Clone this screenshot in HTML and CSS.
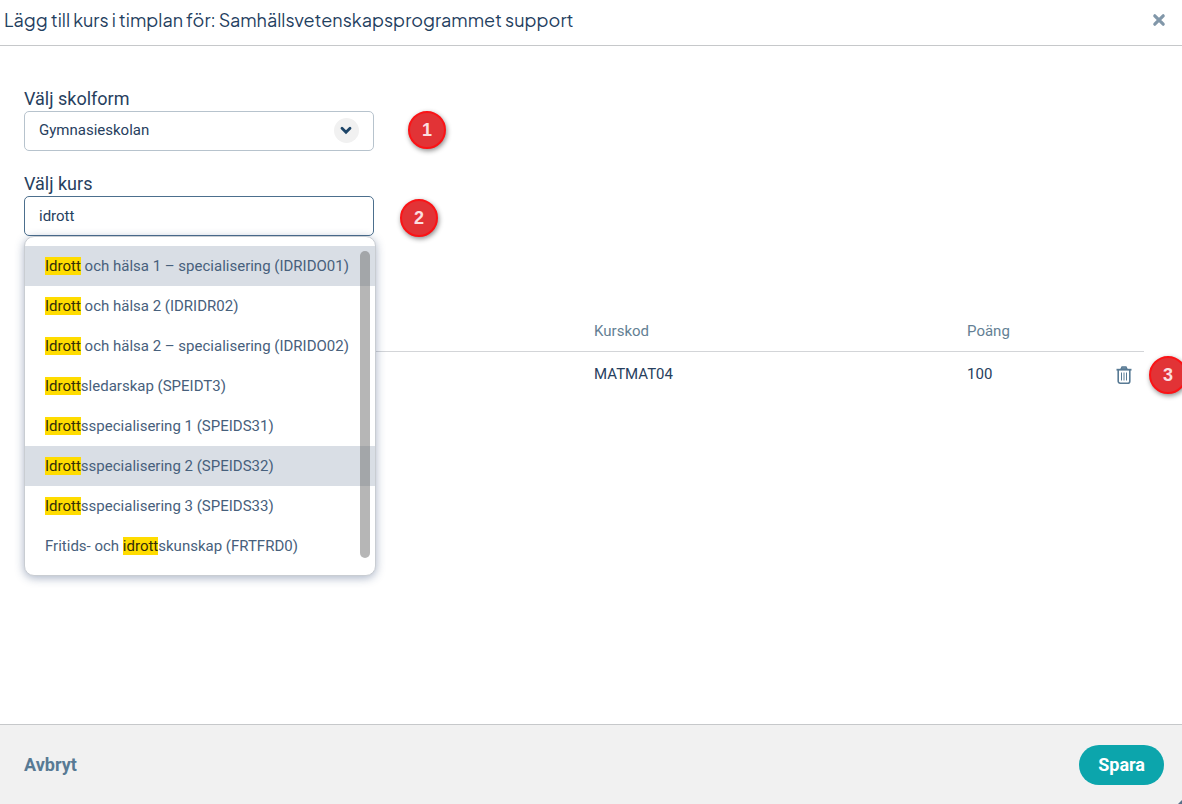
FILE: index.html
```html
<!DOCTYPE html>
<html lang="sv">
<head>
<meta charset="utf-8">
<meta name="viewport" content="width=device-width, initial-scale=1">
<title>Lägg till kurs i timplan</title>
<link rel="stylesheet" href="styles.css">
</head>
<body>
<main class="dialog">
  <header class="dialog-header">
    <h1 class="dialog-title">Lägg till kurs i timplan för: Samhällsvetenskapsprogrammet support</h1>
    <button class="close-button" type="button" aria-label="Stäng">
      <svg width="14" height="14" viewBox="0 0 14 14"><path d="M2.8 2.8 11.2 11.2M11.2 2.8 2.8 11.2" fill="none" stroke="#8197a9" stroke-width="3.2" stroke-linecap="round"/></svg>
    </button>
  </header>

  <section class="dialog-body">
    <div class="field">
      <label class="field-label" for="school-form">Välj skolform</label>
      <div class="control">
        <select class="input select" id="school-form">
          <option>Gymnasieskolan</option>
        </select>
        <span class="chevron">
          <svg width="15" height="11" viewBox="0 0 15 11"><path d="M3 3.2 7 7.2 11 3.2" fill="none" stroke="#1d4568" stroke-width="2.8" stroke-linecap="round"/></svg>
        </span>
        <span class="callout callout-first">1</span>
      </div>
    </div>

    <div class="field">
      <label class="field-label" for="course">Välj kurs</label>
      <div class="control">
        <input class="input input-active" id="course" type="text" value="idrott" autocomplete="off">
        <span class="callout callout-second">2</span>
        <div class="menu">
          <ul class="menu-list">
            <li class="menu-item selected"><mark>Idrott</mark> och hälsa 1 – specialisering (IDRIDO01)</li>
            <li class="menu-item"><mark>Idrott</mark> och hälsa 2 (IDRIDR02)</li>
            <li class="menu-item"><mark>Idrott</mark> och hälsa 2 – specialisering (IDRIDO02)</li>
            <li class="menu-item"><mark>Idrott</mark>sledarskap (SPEIDT3)</li>
            <li class="menu-item"><mark>Idrott</mark>sspecialisering 1 (SPEIDS31)</li>
            <li class="menu-item selected"><mark>Idrott</mark>sspecialisering 2 (SPEIDS32)</li>
            <li class="menu-item"><mark>Idrott</mark>sspecialisering 3 (SPEIDS33)</li>
            <li class="menu-item">Fritids- och <mark>idrott</mark>skunskap (FRTFRD0)</li>
          </ul>
          <span class="scroll-thumb"></span>
        </div>
      </div>
    </div>

    <table class="courses">
      <colgroup><col class="col-name"><col class="col-code"><col><col class="col-action"></colgroup>
      <thead>
        <tr><th></th><th scope="col">Kurskod</th><th scope="col">Poäng</th><th></th></tr>
      </thead>
      <tbody>
        <tr>
          <td></td>
          <td>MATMAT04</td>
          <td>100</td>
          <td class="action-cell">
            <button class="delete-button" type="button" aria-label="Ta bort">
              <svg width="16" height="18" viewBox="0 0 16 18" fill="none" stroke="#587a94"><path d="M5 3 6 1h4l1 2z" fill="#a9bac8" stroke-width="1.3"/><path d="M.5 3.7h15" stroke-width="1.8"/><path d="M2.2 4v11.2a2 2 0 0 0 2 2h7.6a2 2 0 0 0 2-2V4" stroke-width="1.6"/><path d="M5.5 6.5v8M8 6.5v8M10.5 6.5v8" stroke-width="1"/></svg>
            </button>
            <span class="callout callout-third">3</span>
          </td>
        </tr>
      </tbody>
    </table>
  </section>

  <footer class="dialog-footer">
    <button class="cancel-button" type="button">Avbryt</button>
    <button class="save-button" type="button">Spara</button>
    <svg class="resize-corner" width="4" height="4" viewBox="0 0 4 4"><path d="M4 0v4H0z" fill="#587089"/></svg>
  </footer>
</main>
</body>
</html>
```
FILE: styles.css
```css
* {
  box-sizing: border-box;
}

body {
  margin: 0;
  background: #fff;
  color: #27405e;
  font-family: Roboto, "Liberation Sans", sans-serif;
  font-size: 15px;
  line-height: 20px;
}

button {
  padding: 0;
  border: 0;
  background: none;
  font: inherit;
  cursor: pointer;
}

svg {
  display: block;
}

.dialog {
  display: flex;
  flex-direction: column;
  min-height: 100vh;
  overflow: hidden;
}

.dialog-header {
  display: flex;
  align-items: center;
  justify-content: space-between;
  padding: 8px 16px 13px 4px;
  border-bottom: 1px solid #c6c8ca;
}

.dialog-title {
  margin: 0;
  color: #1f4060;
  font-family: "Plus Jakarta Sans", Inter, sans-serif;
  font-size: 18px;
  font-weight: 400;
  line-height: 24px;
}

.dialog-body {
  flex: 1;
  padding: 41px 38px 24px 24px;
}

.field {
  max-width: 350px;
  margin-bottom: 21px;
}

.field-label {
  display: block;
  font-size: 18px;
  line-height: 24px;
}

.control {
  position: relative;
}

.input {
  display: block;
  width: 100%;
  height: 40px;
  padding: 0 14px;
  border: 1px solid #b7c3cd;
  border-radius: 5px;
  outline: 0;
  background: #fff;
  color: #27405e;
  font: inherit;
}

.select {
  padding-bottom: 2px;
  appearance: none;
}

.input-active {
  border-color: #4c6f8d;
}

.chevron {
  position: absolute;
  top: 7px;
  right: 15px;
  display: grid;
  place-items: center;
  width: 25px;
  height: 25px;
  border-radius: 50%;
  background: #f1f1f1;
  pointer-events: none;
}

.callout {
  position: absolute;
  display: grid;
  place-items: center;
  width: 38px;
  height: 38px;
  border: 2px solid #fb1316;
  border-radius: 50%;
  background: #e23336;
  box-shadow: 1px 2px 5px rgba(0, 0, 0, 0.45);
  color: #fbdfe0;
  font-family: "Liberation Sans", Arial, sans-serif;
  font-size: 18px;
  font-weight: 700;
}

.callout-first {
  top: 0;
  left: 384px;
}

.callout-second {
  top: 3px;
  left: 376px;
}

.callout-third {
  top: 4px;
  right: -43px;
}

.menu {
  position: absolute;
  top: 40px;
  left: 0;
  right: -2px;
  padding: 9px 0;
  border: 1px solid #c9cdd2;
  border-radius: 10px;
  background: #fff;
  box-shadow: 0 2px 10px rgba(39, 64, 110, 0.4);
}

.menu-list {
  margin: 0;
  padding: 0;
  list-style: none;
}

.menu-item {
  padding: 10px 20px;
  color: #47607c;
  white-space: nowrap;
}

.menu-item.selected {
  background: #d9dee5;
}

mark {
  background: #ffdc00;
  color: #332e08;
}

.scroll-thumb {
  position: absolute;
  top: 14px;
  right: 5px;
  bottom: 17px;
  width: 10px;
  border-radius: 5px;
  background: rgba(110, 110, 110, 0.5);
}

.courses {
  width: 100%;
  margin-top: 75px;
  border-spacing: 0;
  table-layout: fixed;
}

.col-name {
  width: 50.9%;
}

.col-code {
  width: 33.3%;
}

.col-action {
  width: 60px;
}

.courses th {
  height: 41px;
  padding: 0;
  border-bottom: 1px solid #d3d5d8;
  color: #647f94;
  font-weight: 400;
  text-align: left;
}

.courses td {
  height: 44px;
  padding: 0;
}

.courses .action-cell {
  position: relative;
  padding-top: 1px;
}

.delete-button {
  display: block;
  margin: 0 12px 0 auto;
}

.dialog-footer {
  position: relative;
  display: flex;
  align-items: center;
  justify-content: space-between;
  padding: 20px 18px 19px 24px;
  border-top: 1px solid #c6c8ca;
  background: #f1f1f1;
}

.cancel-button,
.save-button {
  height: 40px;
  font-size: 18px;
  font-weight: 700;
}

.cancel-button {
  color: #587a94;
}

.save-button {
  padding: 0 19px;
  border-radius: 20px;
  background: #0ca5ac;
  color: #fff;
}

.resize-corner {
  position: absolute;
  right: 0;
  bottom: 0;
}
```
